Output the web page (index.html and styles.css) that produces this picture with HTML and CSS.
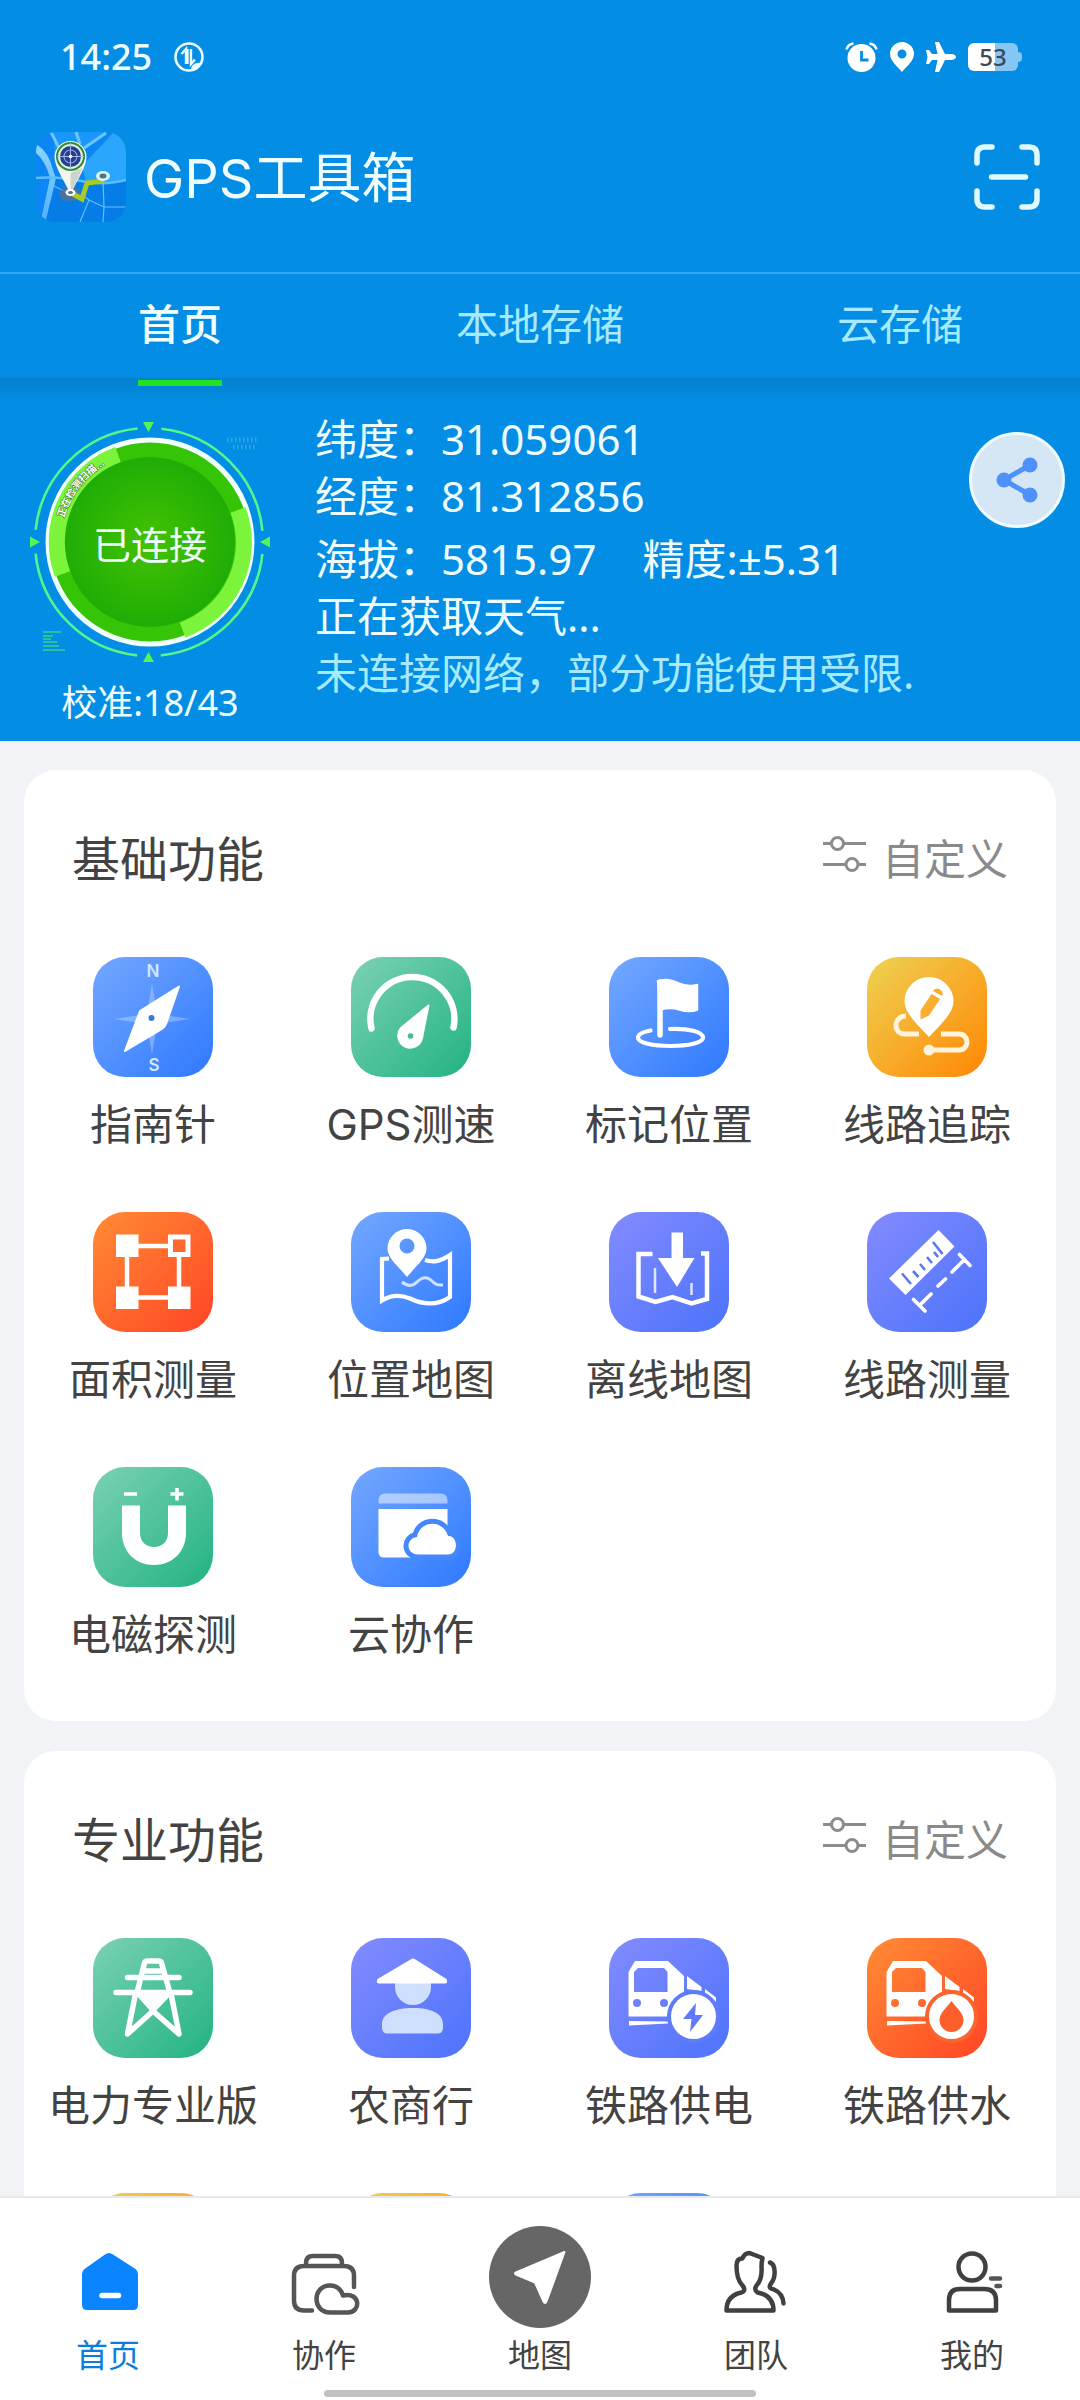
FILE: index.html
```html
<!DOCTYPE html>
<html lang="zh-CN">
<head>
<meta charset="utf-8">
<meta name="viewport" content="width=device-width, initial-scale=1">
<title>GPS工具箱</title>
<link rel="stylesheet" href="styles.css">
</head>
<body>
<div class="app">
  <header class="header">
    <div class="status-bar">
      <span class="clock">14:25</span>
      <svg class="net-icon" width="30" height="30" viewBox="0 0 30 30" aria-hidden="true">
        <circle cx="15" cy="15" r="13.5" fill="none" stroke="#eafcff" stroke-width="2.6"/>
        <path d="M7.5 12l4.500-5v15M13.500 7v15M17 7v15l4-4.500" fill="none" stroke="#eafcff" stroke-width="2.400"/>
        <path d="M17 28c0-5 4-8 10-7-1 4-5 7-10 7z" fill="#eafcff"/>
      </svg>
      <div class="status-icons">
        <svg width="33" height="30" viewBox="0 0 33 30" aria-hidden="true">
          <circle cx="16.500" cy="16" r="14" fill="#fff"/>
          <path d="M1.500 7.500Q3 2 8.500 1.500M31.500 7.500Q30 2 24.500 1.500" fill="none" stroke="#fff" stroke-width="2.600"/>
          <path d="M16.500 9v9h7" fill="none" stroke="#038de4" stroke-width="2.800"/>
        </svg>
        <svg width="24" height="30" viewBox="0 0 24 30" aria-hidden="true">
          <path fill-rule="evenodd" d="M12 0a12 12 0 0 1 12 12c0 7-8 13-12 18C8 25 0 19 0 12A12 12 0 0 1 12 0zm0 7.500a4.500 4.500 0 1 0 0 9 4.500 4.500 0 0 0 0-9z" fill="#fff"/>
        </svg>
        <svg width="30" height="30" viewBox="0 0 30 30" aria-hidden="true">
          <path d="M9 0h4l6 12h7q4 1 4 3t-4 3h-7l-6 12H9l2.500-12H6l-3 4H0l1.500-7L0 8h3l3 4h5.500z" fill="#fff"/>
        </svg>
        <span class="battery"><span class="battery-level">53</span></span>
      </div>
    </div>

    <div class="app-bar">
      <svg class="logo" width="90" height="90" viewBox="0 0 90 90" aria-hidden="true">
        <defs>
          <clipPath id="logo-clip"><rect width="90" height="90" rx="20"/></clipPath>
          <linearGradient id="road" x1="0" y1="0" x2="0" y2="1"><stop offset="0" stop-color="#8fd4ff"/><stop offset="1" stop-color="#4fb2ff"/></linearGradient>
        </defs>
        <g clip-path="url(#logo-clip)">
          <rect width="90" height="90" fill="#0b86f2"/>
          <path d="M90 0H78L46 34l4 16 40 1z" fill="#2aa6fc"/>
          <path d="M18 0h54L44 20 30 46 18 20z" fill="#1a97fb"/>
          <path d="M18 46q40 8 72 2v42H8z" fill="#067de6"/>
          <path d="M0 12q13 8 17 26l3 8L10 88H5l9-42Q9 28 0 21z" fill="url(#road)"/>
          <path d="M15 0l8 16M70 1L48 16M40 0l4 12" fill="none" stroke="#6fc6ff" stroke-width="3"/>
          <path d="M0 46q24-2 50 4 22 3 40-2" fill="none" stroke="#5bbdff" stroke-width="2.500"/>
          <path d="M44 90l9-22-8-6M53 68l15 7h22M67 48l1 27-1 15M18 54l12 6" fill="none" stroke="#62bff8" stroke-width="1.200"/>
          <ellipse cx="34" cy="62" rx="11" ry="7" fill="#5d6f8d" opacity=".8"/>
          <path d="M37 62l9 5 5-16 17-2" fill="none" stroke="#a9cc22" stroke-width="5"/>
          <ellipse cx="67" cy="44" rx="7" ry="5" fill="#d9f3ff"/><ellipse cx="67" cy="44" rx="3.500" ry="2.500" fill="#47748b"/>
        </g>
        <path d="M34.500 9a16 16 0 0 1 16 16c0 9-8 21-16 37-8-16-16-28-16-37a16 16 0 0 1 16-16z" fill="#f2f6ee"/>
        <path d="M34.500 62V41l12-5q-6 14-12 26z" fill="#cfd3cf"/>
        <circle cx="34.500" cy="24.500" r="13.500" fill="#e6f0df" stroke="#2f8a34" stroke-width="2"/>
        <circle cx="34.500" cy="24.500" r="10.500" fill="#263f8f"/>
        <circle cx="34.500" cy="24.500" r="6.500" fill="none" stroke="#8ea6e6" stroke-width="1.200"/>
        <path d="M34.500 11v27M21 24.500h27" stroke="#a9b7e6" stroke-width="1"/>
        <circle cx="34.500" cy="24.500" r="1.800" fill="#fff"/>
        <ellipse cx="34.500" cy="60.500" rx="5" ry="3.500" fill="#fff"/><ellipse cx="34.500" cy="60.500" rx="2.500" ry="1.600" fill="#58708a"/>
      </svg>
      <h1 class="app-title">GPS工具箱</h1>
      <button class="icon-button" type="button" aria-label="扫一扫">
        <svg width="66" height="66" viewBox="0 0 66 66" aria-hidden="true">
          <path d="M3 19v-8q0-8 8-8h7M48 3h7q8 0 8 8v8M63 47v8q0 8-8 8h-7M18 63h-7q-8 0-8-8v-8M17.500 33h34" fill="none" stroke="#dffaff" stroke-width="5.500" stroke-linecap="round"/>
        </svg>
      </button>
    </div>

    <nav class="tabs">
      <a class="tab tab-active" href="#home">首页</a>
      <a class="tab" href="#local">本地存储</a>
      <a class="tab" href="#cloud">云存储</a>
    </nav>
  </header>

  <section class="position">
    <div class="dial-column">
      <button class="dial" type="button">
        <svg class="dial-art" width="240" height="240" viewBox="0 0 240 240" aria-hidden="true">
          <defs>
            <radialGradient id="dial-core"><stop offset="0" stop-color="#45c202"/><stop offset="1" stop-color="#1fad06"/></radialGradient>
            <path id="dial-arc" d="M34 96A90 90 0 0 1 84 38"/>
          </defs>
          <circle cx="119" cy="120" r="114" fill="none" stroke="#55f58c" stroke-width="2.600" stroke-dasharray="155 24.070" stroke-dashoffset="-12"/>
          <path d="M113 0h11l-5.500 10zM113 240h11l-5.500-10zM0 114.500v11l10-5.500zM240 114.500v11l-10-5.500z" fill="#55f555"/>
          <circle cx="120" cy="120" r="102" fill="#36c506" stroke="#f1fffa" stroke-width="5"/>
          <circle cx="120" cy="120" r="85" fill="url(#dial-core)"/>
          <path d="M88 32.500A93 93 0 0 0 32.500 152M208 88A93 93 0 0 1 152.500 208" fill="none" stroke="#7cf43c" stroke-width="16"/>
          <text class="dial-scan"><textPath href="#dial-arc">正在检测扫描...</textPath></text>
          <path d="M13 210h18M13 214h10M13 217h8M13 220h14M13 224h16M13 228h22" stroke="#3cd08a" stroke-width="1.500"/>
          <path d="M197 18h30M203 25h24" stroke="#2fa9d6" stroke-width="5" stroke-dasharray="1.500 2.500"/>
        </svg>
        <span class="dial-text">已连接</span>
      </button>
      <p class="calibration">校准:18/43</p>
    </div>
    <div class="readings">
      <p>纬度：31.059061</p>
      <p>经度：81.312856</p>
      <p class="altitude"><span>海拔：5815.97</span><span>精度:±5.31</span></p>
      <p>正在获取天气...</p>
      <p class="offline">未连接网络，部分功能使用受限.</p>
    </div>
    <button class="share" type="button" aria-label="分享">
      <svg width="44" height="48" viewBox="0 0 44 48" aria-hidden="true">
        <path d="M35 9L9 24l26 15" fill="none" stroke="#4f90fa" stroke-width="5"/>
        <circle cx="35" cy="9" r="7.500" fill="#4f90fa"/><circle cx="9" cy="24" r="7.500" fill="#4f90fa"/><circle cx="35" cy="39" r="7.500" fill="#4f90fa"/>
      </svg>
    </button>
  </section>

  <main class="content">
    <section class="card">
      <div class="card-head">
        <h2 class="card-title">基础功能</h2>
        <button class="customize" type="button">
          <svg class="sliders" width="43" height="36" viewBox="0 0 43 36" aria-hidden="true">
            <path d="M0 7.500h8M21 7.500h22M0 28.500h22M36 28.500h7"/><circle cx="14.500" cy="7.500" r="6"/><circle cx="29" cy="28.500" r="6"/>
          </svg>
          <span>自定义</span>
        </button>
      </div>
      <div class="grid">
        <a class="tool" href="#compass">
          <svg class="tile blue" viewBox="0 0 120 120" aria-hidden="true">
            <path d="M59 26l5 31 33 5-33 5-5 31-5-31-33-5 33-5z" fill="#fff" opacity=".28"/>
            <path d="M86 29.500L73 67q-1 3-4 5L32 94l15-40z" fill="#fff" stroke="#fff" stroke-width="2" stroke-linejoin="round"/>
            <circle cx="58.500" cy="61" r="3" fill="#3d78d8"/>
            <text class="compass-letter" x="60" y="20">N</text><text class="compass-letter" x="61" y="114">S</text>
          </svg>
          <span>指南针</span>
        </a>
        <a class="tool" href="#speed">
          <svg class="tile green" viewBox="0 0 120 120" aria-hidden="true">
            <path d="M20.500 71.500A42 42 0 1 1 102.500 70.500" fill="none" stroke="#fff" stroke-width="6.500" stroke-linecap="round"/>
            <path d="M77.500 48.500L71 81a12 12 0 1 1-21-10z" fill="#fff" stroke="#fff" stroke-width="2" stroke-linejoin="round"/>
            <circle cx="59.500" cy="79" r="2.800" fill="#43bb93"/>
          </svg>
          <span>GPS测速</span>
        </a>
        <a class="tool" href="#mark">
          <svg class="tile blue" viewBox="0 0 120 120" aria-hidden="true">
            <path d="M51 25v53" stroke="#fff" stroke-width="5.500" stroke-linecap="round"/>
            <path d="M48.500 24q10-4 21 2 9 4 19 1.500V53q-8 3-18 0-9-3-19 0z" fill="#fff" stroke="#fff" stroke-width="1.500" stroke-linejoin="round"/>
            <path d="M61 72c18-1 33 3 33 8.500S79 89 61.500 89 29 86 29 80.500c0-3 5-5.500 12.500-7" fill="none" stroke="#fff" stroke-width="4.200" stroke-linecap="round"/>
          </svg>
          <span>标记位置</span>
        </a>
        <a class="tool" href="#track">
          <svg class="tile amber" viewBox="0 0 120 120" aria-hidden="true">
            <path d="M39 59c-6 0-10 4-10 9.500s4 8.500 9 8.500h14M74 77h18c5 0 8 4 8 8s-3 8-8 8H62" fill="none" stroke="#fff3dc" stroke-width="5"/>
            <circle cx="62" cy="93" r="5.500" fill="#fff3dc"/>
            <path d="M62 20a24.500 24.500 0 0 1 24.500 24.500C86.500 56 74 67 62 80 50 67 37.500 56 37.500 44.500A24.500 24.500 0 0 1 62 20z" fill="#fff"/>
            <path d="M64.500 37l8.500 5-11 16.500-8.500 4v-9zM66 34q3-4 7-1.500t2 6.500z" fill="#f9ae33"/>
          </svg>
          <span>线路追踪</span>
        </a>
        <a class="tool" href="#area">
          <svg class="tile red" viewBox="0 0 120 120" aria-hidden="true">
            <path d="M34 34h52v51.500H34z" fill="none" stroke="#fff" stroke-width="4.500"/>
            <path d="M23 22.500h22.500V45H23zM23 74.500h22.500V97H23zM75 74.500h22.500V97H75zM75 22.500h22.500V45H75z" fill="#fff"/>
            <path d="M80 27.500h12.500V40H80z" fill="#fb6a2c"/>
          </svg>
          <span>面积测量</span>
        </a>
        <a class="tool" href="#location-map">
          <svg class="tile blue" viewBox="0 0 120 120" aria-hidden="true">
            <path d="M38 46.500l-7 .5v41.500c8-5 18-6 28-2 15 7 28 7 40-1.500V43c-9 6-16 8-25 5" fill="none" stroke="#fff" stroke-width="4.200"/>
            <path d="M51 70c5 4 10 5 15 0s10-6 15-1 7 4 11 4" fill="none" stroke="#fff" stroke-width="3" opacity=".75"/>
            <path fill-rule="evenodd" d="M56 17a19.500 19.500 0 0 1 19.500 19.500C75.500 46 65 54 56 65 47 54 36.500 46 36.500 36.500A19.500 19.500 0 0 1 56 17zm0 9.500a7.500 7.500 0 1 0 0 15 7.500 7.500 0 0 0 0-15z" fill="#fff"/>
          </svg>
          <span>位置地图</span>
        </a>
        <a class="tool" href="#offline-map">
          <svg class="tile violet" viewBox="0 0 120 120" aria-hidden="true">
            <path d="M43.500 42h-14v42.500L46.500 90l17-5 19 6.500L98 87V41.500h-6" fill="none" stroke="#fff" stroke-width="4.500"/>
            <path d="M46 56v25M82.500 71v12" stroke="#fff" stroke-width="2.500" opacity=".8"/>
            <path d="M62.500 20.500h11.500V46h11.500L68 75 49 46h13.500z" fill="#fff"/>
          </svg>
          <span>离线地图</span>
        </a>
        <a class="tool" href="#line-measure">
          <svg class="tile violet" viewBox="0 0 120 120" aria-hidden="true">
            <path d="M71.500 18L87.500 34.500 38.500 83 22 66.500z" fill="#fff"/>
            <path d="M35 61.500l9 10.500M46 59l5.500 6M53 52l5 6M60 45l5 6M66 30l9.500 12M67 40l4 5" stroke="#5a78ef" stroke-width="2.600"/>
            <path d="M46.500 87.500L58 99M53 93l11-11M71 74l7.500-7M85 60l12-12M92.500 42.500l10.500 11" stroke="#fff" stroke-width="3.600" stroke-linecap="round"/>
          </svg>
          <span>线路测量</span>
        </a>
        <a class="tool" href="#magnetic">
          <svg class="tile green" viewBox="0 0 120 120" aria-hidden="true">
            <path d="M31 27h13M77.500 27h13M84 21v12.500" stroke="#fff" stroke-width="3.600"/>
            <path d="M29 38.500h18V66c0 8.500 6 14 14 14s14-5.500 14-14V38.500h18V66c0 19-14 32-32 32S29 85 29 66z" fill="#fff"/>
          </svg>
          <span>电磁探测</span>
        </a>
        <a class="tool" href="#cloud-work">
          <svg class="tile blue" viewBox="0 0 120 120" aria-hidden="true">
            <path d="M27.500 36.500v-3q0-7 7-7h55q7 0 7 7v3z" fill="#fff" opacity=".5"/>
            <path d="M27.500 42h69v48.500H33q-5.500 0-5.500-5.500z" fill="#fff"/>
            <path d="M67 87.500c-12 0-13-16-1-17.500 3-17 26-18 31-1 10-1 11 18.500 0 18.500z" fill="#fff" stroke="#4488fc" stroke-width="10"/>
            <path d="M67 87.500c-12 0-13-16-1-17.500 3-17 26-18 31-1 10-1 11 18.500 0 18.500z" fill="#fff"/>
          </svg>
          <span>云协作</span>
        </a>
      </div>
    </section>

    <section class="card">
      <div class="card-head">
        <h2 class="card-title">专业功能</h2>
        <button class="customize" type="button">
          <svg class="sliders" width="43" height="36" viewBox="0 0 43 36" aria-hidden="true">
            <path d="M0 7.500h8M21 7.500h22M0 28.500h22M36 28.500h7"/><circle cx="14.500" cy="7.500" r="6"/><circle cx="29" cy="28.500" r="6"/>
          </svg>
          <span>自定义</span>
        </button>
      </div>
      <div class="grid">
        <a class="tool" href="#power">
          <svg class="tile green" viewBox="0 0 120 120" aria-hidden="true">
            <g fill="none" stroke="#fff" stroke-width="5.500" stroke-linecap="round" stroke-linejoin="round">
              <path d="M44 55l7.500-30q.5-2 3-2h11q2.500 0 3 2L77 55M52 33h16M34.500 39.500h51.500M23 54.500h74"/>
              <path d="M42 58l-7.500 38L60 73l26 23-7.500-38"/>
            </g>
            <path d="M42 56h37L60 76z" fill="#fff"/>
          </svg>
          <span>电力专业版</span>
        </a>
        <a class="tool" href="#rural-bank">
          <svg class="tile violet" viewBox="0 0 120 120" aria-hidden="true">
            <path d="M44 45h36v4a18 18 0 0 1-36 0zM31 86c0-10 12-16 31-16s30 6 30 16v4q0 5.500-6 5.500H37q-6 0-6-5.500z" fill="#cfe0ff"/>
            <path d="M59.500 21.500q2.500-2 5 0L95.500 41q2 4.500-2 4.500h-65q-4 0-2-4.500z" fill="#fff"/>
          </svg>
          <span>农商行</span>
        </a>
        <a class="tool" href="#rail-power">
          <svg class="tile violet" viewBox="0 0 120 120" aria-hidden="true">
            <path fill-rule="evenodd" d="M19.500 78.500V34L26 23h33l16 15v18q-14 6-17 22.500zM25 54h33.500V34L55 30H29l-4 4zM28 61a4 4 0 1 0 0 8 4 4 0 0 0 0-8zM55 61a4 4 0 1 0 0 8 4 4 0 0 0 0-8zM78 38l14.500 11v4L78 51zM96 51l11 8.500V64L96 55.500zM20 83l39 .5v2L20 87.500z" fill="#fff"/>
            <circle cx="84.500" cy="78.500" r="24.500" fill="#fff" stroke="#5e7bfb" stroke-width="4"/>
            <path d="M87 65L74 81h8.500l-1.500 13L94 77h-8z" fill="#5e7bfb"/>
          </svg>
          <span>铁路供电</span>
        </a>
        <a class="tool" href="#rail-water">
          <svg class="tile red" viewBox="0 0 120 120" aria-hidden="true">
            <path fill-rule="evenodd" d="M19.500 78.500V34L26 23h33l16 15v18q-14 6-17 22.500zM25 54h33.500V34L55 30H29l-4 4zM28 61a4 4 0 1 0 0 8 4 4 0 0 0 0-8zM55 61a4 4 0 1 0 0 8 4 4 0 0 0 0-8zM78 38l14.500 11v4L78 51zM96 51l11 8.500V64L96 55.500zM20 83l39 .5v2L20 87.500z" fill="#fff"/>
            <circle cx="84.500" cy="78.500" r="24.500" fill="#fff" stroke="#fc632d" stroke-width="4"/>
            <path d="M84.500 63c5 7 12 12 12 19a12 12 0 0 1-24 0c0-7 7-12 12-19z" fill="#fc5f2c"/>
          </svg>
          <span>铁路供水</span>
        </a>
        <a class="tool" href="#more-1" aria-label="更多"><svg class="tile amber" viewBox="0 0 120 120" aria-hidden="true"></svg></a>
        <a class="tool" href="#more-2" aria-label="更多"><svg class="tile amber" viewBox="0 0 120 120" aria-hidden="true"></svg></a>
        <a class="tool" href="#more-3" aria-label="更多"><svg class="tile blue" viewBox="0 0 120 120" aria-hidden="true"></svg></a>
      </div>
    </section>
  </main>

  <nav class="bottom-nav">
    <a class="nav-item nav-active" href="#home">
      <svg width="102" height="102" viewBox="0 0 102 102" aria-hidden="true">
        <path d="M25 48q0-3 2.500-5L48 28.500q4-3 8 0L78.500 43q2.500 2 2.500 5v31q0 5-5 5H30q-5 0-5-5z" fill="#0a84ff"/>
        <path d="M45 69.500h16.500" stroke="#fff" stroke-width="5.500" stroke-linecap="round"/>
      </svg>
      <span>首页</span>
    </a>
    <a class="nav-item" href="#team-work">
      <svg width="102" height="102" viewBox="0 0 102 102" fill="none" stroke="#555" stroke-width="4.500" stroke-linecap="round" aria-hidden="true">
        <path d="M33 38v-1q0-7 7-7h22q7 0 7 7v1M39 84.500h-8q-10 0-10-10V50q0-10 10-10h40q10 0 10 10v11"/>
        <path d="M57 86.500c-18 0-18-27 0-27 7 0 11 4 13 10 18-4 18 17 5 17z" stroke-linejoin="round"/>
      </svg>
      <span>协作</span>
    </a>
    <a class="nav-item" href="#map">
      <svg width="102" height="102" viewBox="0 0 102 102" aria-hidden="true">
        <circle cx="51" cy="51" r="51" fill="#666"/>
        <path d="M27 46.500L75.500 26 57.500 75.500q-1.500 3-3 0L46 56.500l-19-8q-2-1 0-2z" fill="#fff" stroke="#fff" stroke-width="2" stroke-linejoin="round"/>
      </svg>
      <span>地图</span>
    </a>
    <a class="nav-item" href="#team">
      <svg width="102" height="102" viewBox="0 0 102 102" fill="none" stroke="#404040" stroke-width="4.500" stroke-linecap="round" stroke-linejoin="round" aria-hidden="true">
        <path d="M57.500 32l-13-5q-5 0-7 5.500-6 0-6 7 0 14 6 20 4 5-1 7-15 3-15 18h47q0-15-16-18-4-3-1-7 6-6 5-19 0-4 1-8.500z"/>
        <path d="M65 36.500c6 2 6 15 1 21-3 5 0 5 3 6q9 4 9.500 14"/>
      </svg>
      <span>团队</span>
    </a>
    <a class="nav-item" href="#me">
      <svg width="102" height="102" viewBox="0 0 102 102" fill="none" stroke="#404040" stroke-width="4.500" stroke-linecap="round" aria-hidden="true">
        <circle cx="51" cy="41" r="13.500"/>
        <path d="M28 84.500V74q0-11 11-11h24q12 0 12 11v10.500z" stroke-linejoin="round"/>
        <path d="M70 52.500h9M75.500 60h3.500" stroke="#555"/>
      </svg>
      <span>我的</span>
    </a>
    <div class="home-indicator"></div>
  </nav>
</div>
</body>
</html>
```
FILE: styles.css
```css
* {
  box-sizing: border-box;
}

body {
  margin: 0;
  background: #f2f3f6;
  color: #434343;
  font-family: "Noto Sans", "Noto Sans CJK SC", sans-serif;
}

h1, h2, p {
  margin: 0;
  font-weight: 400;
}

a {
  color: inherit;
  text-decoration: none;
}

button {
  margin: 0;
  padding: 0;
  border: 0;
  background: none;
  color: inherit;
  font: inherit;
  cursor: pointer;
}

svg {
  display: block;
  flex: none;
}

.app {
  display: flex;
  flex-direction: column;
  height: 100vh;
}

/* Header */
.header {
  position: relative;
  z-index: 1;
  background: #038de4;
  color: #f0fdff;
}

.status-bar {
  display: flex;
  align-items: center;
  height: 114px;
  padding: 0 62px 0 60px;
}

.clock {
  font-size: 36px;
  font-weight: 500;
  line-height: 40px;
}

.net-icon {
  margin-left: 22px;
}

.status-icons {
  display: flex;
  align-items: center;
  gap: 12px;
  margin-left: auto;
}

.battery {
  position: relative;
  width: 50px;
  height: 28px;
  border-radius: 6px;
  background: linear-gradient(90deg, #fff 54%, #86c6f3 54%);
}

.battery::after {
  content: "";
  position: absolute;
  top: 9px;
  right: -4px;
  width: 4px;
  height: 10px;
  border-radius: 0 4px 4px 0;
  background: #86c6f3;
}

.battery-level {
  display: block;
  color: #3b4a58;
  font-size: 24px;
  font-weight: 500;
  line-height: 28px;
  text-align: center;
}

.app-bar {
  display: flex;
  align-items: center;
  gap: 18px;
  padding: 18px 40px 50px 36px;
}

.app-title {
  flex: 1;
  padding-top: 4px;
  font-family: Inter, "Noto Sans CJK SC", sans-serif;
  font-size: 54px;
  line-height: 80px;
}

.tabs {
  display: grid;
  grid-template-columns: repeat(3, 1fr);
  border-top: 2px solid #2fa8f8;
}

.tab {
  position: relative;
  padding: 20px 0 24px;
  color: #a6eaff;
  font-size: 42px;
  line-height: 60px;
  text-align: center;
}

.tab-active {
  color: #f0fdff;
  font-weight: 500;
}

.tab-active::after {
  content: "";
  position: absolute;
  bottom: -8px;
  left: calc(50% - 42px);
  width: 84px;
  height: 6px;
  background: #22e322;
}

/* Position panel */
.position {
  display: flex;
  align-items: flex-start;
  padding: 0 15px 13px 30px;
  background: linear-gradient(#0380cd, #038de4 24px);
  color: #effdff;
}

.dial-column {
  padding-top: 44px;
}

.dial {
  display: grid;
  place-items: center;
}

.dial-art,
.dial-text {
  grid-area: 1 / 1;
}

.dial-text {
  padding-top: 4px;
  font-size: 38px;
  line-height: 56px;
}

.dial-scan {
  fill: #fff;
  stroke: #3c7a1c;
  stroke-width: 1px;
  paint-order: stroke;
  font-size: 10px;
  font-weight: 700;
}

.calibration {
  margin-top: 16px;
  font-size: 36px;
  line-height: 50px;
  text-align: center;
}

.readings {
  flex: 1;
  padding: 32px 0 0 45px;
  font-size: 42px;
  line-height: 57px;
}

.altitude {
  display: flex;
  gap: 46px;
  margin-top: 6px;
}

.offline {
  color: #a6eaff;
}

.share {
  display: grid;
  place-items: center;
  width: 96px;
  height: 96px;
  margin-top: 54px;
  border: 3px solid #effcff;
  border-radius: 50%;
  background: #d5e6f5;
}

/* Feature cards */
.content {
  display: flex;
  flex: 1;
  flex-direction: column;
  gap: 30px;
  min-height: 0;
  padding: 29px 24px 0;
  overflow-y: auto;
  scrollbar-width: none;
}

.card {
  flex: none;
  padding: 54px 0 56px;
  border-radius: 32px;
  background: #fff;
}

.card-head {
  display: flex;
  align-items: center;
  justify-content: space-between;
  padding: 0 48px;
}

.card-title {
  font-size: 48px;
  line-height: 70px;
}

.customize {
  display: flex;
  align-items: center;
  gap: 16px;
  color: #8a8a8a;
  font-size: 42px;
  line-height: 60px;
}

.sliders {
  margin-bottom: 10px;
  fill: none;
  stroke: #8c8c8c;
  stroke-width: 3px;
}

.grid {
  display: grid;
  grid-template-columns: repeat(4, 1fr);
  row-gap: 57px;
  padding-top: 63px;
}

.tool {
  display: flex;
  flex-direction: column;
  align-items: center;
  gap: 18px;
  font-family: Inter, "Noto Sans CJK SC", sans-serif;
  font-size: 42px;
  line-height: 60px;
  white-space: nowrap;
}

.tile {
  width: 120px;
  height: 120px;
  border-radius: 32px;
}

.blue {
  background: linear-gradient(135deg, #74a8ff, #2e79ff);
}

.green {
  background: linear-gradient(135deg, #7bd1b3, #22b383);
}

.amber {
  background: linear-gradient(135deg, #efd252, #ff8704);
}

.red {
  background: linear-gradient(135deg, #ff8c34, #ff4526);
}

.violet {
  background: linear-gradient(135deg, #838bff, #4c73fb);
}

.compass-letter {
  fill: #cfe8ff;
  font-size: 17px;
  font-weight: 600;
  text-anchor: middle;
}

/* Bottom navigation */
.bottom-nav {
  display: grid;
  grid-template-columns: repeat(5, 1fr);
  padding: 28px 0 3px;
  border-top: 2px solid #e9e9ec;
  background: #fff;
}

.nav-item {
  display: flex;
  flex-direction: column;
  align-items: center;
  gap: 2px;
  font-size: 32px;
  line-height: 50px;
}

.nav-active {
  color: #0b7ddc;
}

.home-indicator {
  grid-column: 1 / -1;
  justify-self: center;
  width: 40%;
  height: 7px;
  margin-top: 10px;
  border-radius: 4px;
  background: #c2c2c2;
}
```
